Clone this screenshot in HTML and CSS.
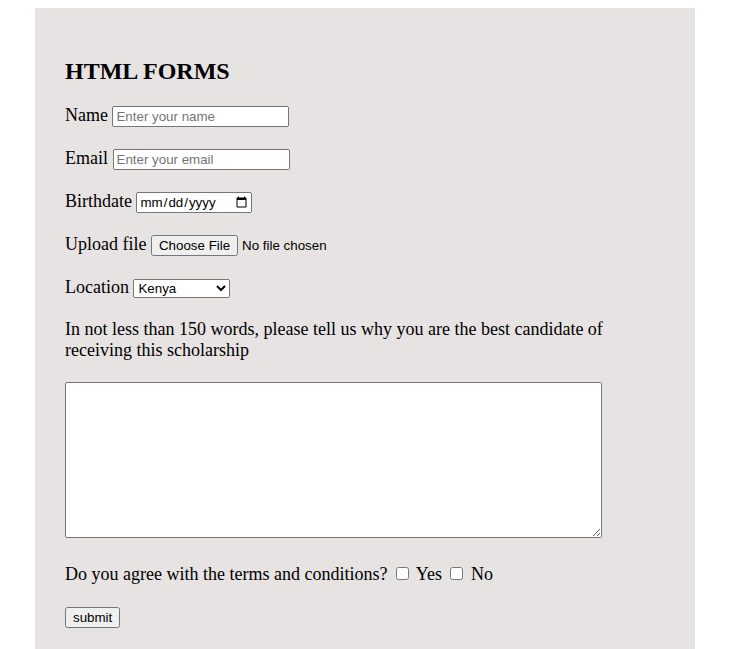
FILE: index.html
```html
<!DOCTYPE html>
<html>
<head>
<meta charset="utf-8">
<title>HTML Forms</title>
<link rel="stylesheet" href="styles.css">
</head>
<body>
<div class="container">
  <h2 class="title">HTML FORMS</h2>
  <form class="form">
    <label for="name">Name</label>
    <input class="text-input" type="text" id="name" placeholder="Enter your name"><br><br>
    <label for="email">Email</label>
    <input class="text-input" type="email" id="email" placeholder="Enter your email"><br><br>
    <label for="bd">Birthdate</label>
    <input class="date-input" type="date" id="bd"><br><br>
    <label for="file">Upload file</label>
    <input class="file-input" type="file" id="file"><br><br>
    <label for="loc">Location</label>
    <select class="select" id="loc">
      <option>Kenya</option>
      <option>Uganda</option>
      <option>Tanzania</option>
    </select><br><br>
    <label for="essay">In not less than 150 words, please tell us why you are the best candidate of receiving this scholarship</label><br><br>
    <textarea class="essay" id="essay"></textarea><br><br>
    Do you agree with the terms and conditions?
    <input class="check" type="checkbox" id="yes"> <label for="yes">Yes</label>
    <input class="check" type="checkbox" id="no"> <label for="no">No</label><br><br>
    <input class="submit" type="submit" value="submit">
  </form>
</div>
</body>
</html>
```

FILE: styles.css
```css
body {
  margin: 8px;
  font-family: "Liberation Serif", "Times New Roman", serif;
  font-size: 16px;
  color: #000;
  background: #fff;
}
.container {
  width: 660px;
  margin: 0 auto;
  padding: 30px 30px 40px;
  box-sizing: border-box;
  background: #e7e3e3;
}
.title {
  font-size: 24px;
  font-weight: bold;
  margin: 20px 0;
}
.form {
  font-size: 18px;
}
.form input,
.form select,
.form textarea,
.form button {
  font-family: "Liberation Sans", Arial, sans-serif;
}
.text-input {
  width: 177px;
  height: 21px;
  box-sizing: border-box;
  font-size: 13.33px;
}
.date-input {
  width: 116px;
  height: 21px;
  box-sizing: border-box;
  font-size: 13.33px;
}
.file-input {
  font-size: 13.33px;
}
.select {
  width: 97px;
  height: 19px;
  box-sizing: border-box;
  font-size: 13.33px;
}
.essay {
  width: 537px;
  height: 156px;
  box-sizing: border-box;
}
.submit {
  font-size: 13.33px;
}
```
